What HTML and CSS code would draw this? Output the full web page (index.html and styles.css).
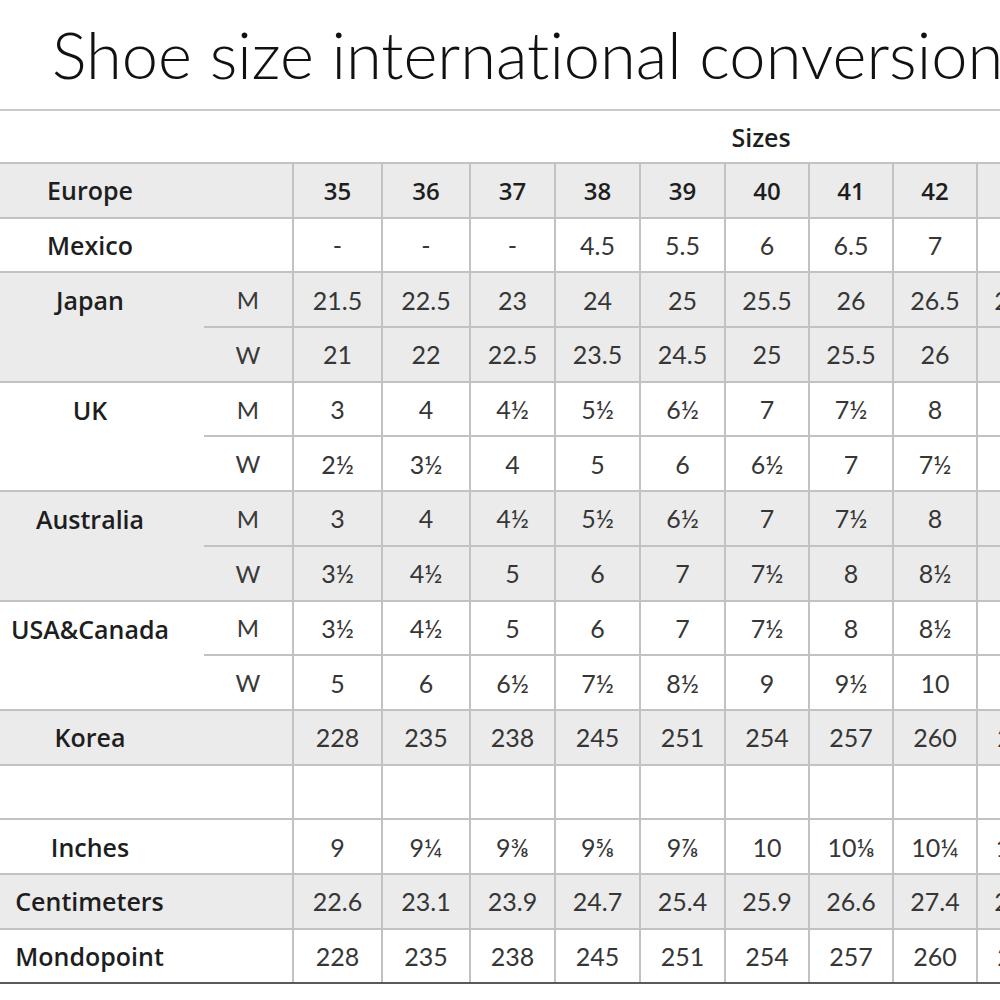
FILE: index.html
```html
<!DOCTYPE html>
<html lang="en">
<head>
<meta charset="utf-8">
<title>Shoe size international conversion</title>
<link rel="stylesheet" href="styles.css">
</head>
<body>
<h1 class="title">Shoe size international conversion</h1>
<table class="chart">
  <colgroup>
    <col class="c-lbl"><col class="c-sub">
    <col class="c-89"><col class="c-88"><col class="c-85"><col class="c-85"><col class="c-85">
    <col class="c-84"><col class="c-84"><col class="c-84"><col class="c-84"><col class="c-84"><col class="c-84">
  </colgroup>
  <tr class="head">
    <td class="blank"></td><td class="blank"></td>
    <td class="sizes" colspan="11">Sizes</td>
  </tr>
  <tr class="grey">
    <td class="lbl">Europe</td><td class="sub"></td>
    <td class="num bold">35</td><td class="num bold">36</td><td class="num bold">37</td><td class="num bold">38</td><td class="num bold">39</td><td class="num bold">40</td><td class="num bold">41</td><td class="num bold">42</td><td class="num bold">43</td><td class="num bold">44</td><td class="num bold">45</td>
  </tr>
  <tr>
    <td class="lbl">Mexico</td><td class="sub"></td>
    <td class="num">-</td><td class="num">-</td><td class="num">-</td><td class="num">4.5</td><td class="num">5.5</td><td class="num">6</td><td class="num">6.5</td><td class="num">7</td><td class="num">7.5</td><td class="num">8.5</td><td class="num">9.5</td>
  </tr>
  <tr class="grey">
    <td class="lbl top" rowspan="2">Japan</td><td class="sub">M</td>
    <td class="num">21.5</td><td class="num">22.5</td><td class="num">23</td><td class="num">24</td><td class="num">25</td><td class="num">25.5</td><td class="num">26</td><td class="num">26.5</td><td class="num">27.5</td><td class="num">28</td><td class="num">29</td>
  </tr>
  <tr class="grey">
    <td class="sub">W</td>
    <td class="num">21</td><td class="num">22</td><td class="num">22.5</td><td class="num">23.5</td><td class="num">24.5</td><td class="num">25</td><td class="num">25.5</td><td class="num">26</td><td class="num">27</td><td class="num">27.5</td><td class="num">28</td>
  </tr>
  <tr>
    <td class="lbl top" rowspan="2">UK</td><td class="sub">M</td>
    <td class="num">3</td><td class="num">4</td><td class="num">4½</td><td class="num">5½</td><td class="num">6½</td><td class="num">7</td><td class="num">7½</td><td class="num">8</td><td class="num">9</td><td class="num">10</td><td class="num">11</td>
  </tr>
  <tr>
    <td class="sub">W</td>
    <td class="num">2½</td><td class="num">3½</td><td class="num">4</td><td class="num">5</td><td class="num">6</td><td class="num">6½</td><td class="num">7</td><td class="num">7½</td><td class="num">8½</td><td class="num">9½</td><td class="num">10½</td>
  </tr>
  <tr class="grey">
    <td class="lbl top" rowspan="2">Australia</td><td class="sub">M</td>
    <td class="num">3</td><td class="num">4</td><td class="num">4½</td><td class="num">5½</td><td class="num">6½</td><td class="num">7</td><td class="num">7½</td><td class="num">8</td><td class="num">9</td><td class="num">10</td><td class="num">11</td>
  </tr>
  <tr class="grey">
    <td class="sub">W</td>
    <td class="num">3½</td><td class="num">4½</td><td class="num">5</td><td class="num">6</td><td class="num">7</td><td class="num">7½</td><td class="num">8</td><td class="num">8½</td><td class="num">9½</td><td class="num">10½</td><td class="num">11½</td>
  </tr>
  <tr>
    <td class="lbl top" rowspan="2">USA&amp;Canada</td><td class="sub">M</td>
    <td class="num">3½</td><td class="num">4½</td><td class="num">5</td><td class="num">6</td><td class="num">7</td><td class="num">7½</td><td class="num">8</td><td class="num">8½</td><td class="num">9½</td><td class="num">10½</td><td class="num">11½</td>
  </tr>
  <tr>
    <td class="sub">W</td>
    <td class="num">5</td><td class="num">6</td><td class="num">6½</td><td class="num">7½</td><td class="num">8½</td><td class="num">9</td><td class="num">9½</td><td class="num">10</td><td class="num">11</td><td class="num">12</td><td class="num">13</td>
  </tr>
  <tr class="grey">
    <td class="lbl">Korea</td><td class="sub"></td>
    <td class="num">228</td><td class="num">235</td><td class="num">238</td><td class="num">245</td><td class="num">251</td><td class="num">254</td><td class="num">257</td><td class="num">260</td><td class="num">267</td><td class="num">273</td><td class="num">279</td>
  </tr>
  <tr>
    <td class="lbl"></td><td class="sub"></td>
    <td class="num"></td><td class="num"></td><td class="num"></td><td class="num"></td><td class="num"></td><td class="num"></td><td class="num"></td><td class="num"></td><td class="num"></td><td class="num"></td><td class="num"></td>
  </tr>
  <tr>
    <td class="lbl">Inches</td><td class="sub"></td>
    <td class="num">9</td><td class="num">9¼</td><td class="num">9⅜</td><td class="num">9⅝</td><td class="num">9⅞</td><td class="num">10</td><td class="num">10⅛</td><td class="num">10¼</td><td class="num">10½</td><td class="num">10¾</td><td class="num">11</td>
  </tr>
  <tr class="grey">
    <td class="lbl wide" colspan="2">Centimeters</td>
    <td class="num">22.6</td><td class="num">23.1</td><td class="num">23.9</td><td class="num">24.7</td><td class="num">25.4</td><td class="num">25.9</td><td class="num">26.6</td><td class="num">27.4</td><td class="num">27.9</td><td class="num">28.6</td><td class="num">29.4</td>
  </tr>
  <tr class="last">
    <td class="lbl wide" colspan="2">Mondopoint</td>
    <td class="num">228</td><td class="num">235</td><td class="num">238</td><td class="num">245</td><td class="num">251</td><td class="num">254</td><td class="num">257</td><td class="num">260</td><td class="num">267</td><td class="num">273</td><td class="num">279</td>
  </tr>
</table>
</body>
</html>
```

FILE: styles.css
```css
html, body {
  margin: 0;
  padding: 0;
  background: #ffffff;
  overflow: hidden;
}

body {
  width: 1000px;
  height: 1000px;
  font-family: "Lato", "Liberation Sans", sans-serif;
  color: #222;
}

.title {
  margin: 0;
  height: 109px;
  padding-left: 52px;
  font-size: 65px;
  font-weight: 300;
  line-height: 109px;
  letter-spacing: 0;
  font-variant-ligatures: none;
  white-space: nowrap;
  color: #111;
  border-bottom: 2px solid #c9c9c9;
  width: 1300px;
  box-sizing: content-box;
}

.chart {
  border-collapse: collapse;
  table-layout: fixed;
  width: 1229px;
}

.c-lbl { width: 204px; }
.c-sub { width: 89px; }
.c-89 { width: 89px; }
.c-88 { width: 88px; }
.c-85 { width: 85px; }
.c-84 { width: 84px; }

.chart tr { height: 54.7px; }
.chart tr.head { height: 52px; }

.chart td {
  padding: 0;
  border-top: 2px solid #c2c2c2;
  border-bottom: 2px solid #c2c2c2;
  font-size: 25px;
  text-align: center;
  vertical-align: middle;
  white-space: nowrap;
}

.chart tr.head td {
  border-top: none;
}

.grey td { background: #ebebeb; }

.sizes,
.lbl,
.num.bold {
  font-family: "Open Sans", "Lato", sans-serif;
  font-weight: 600;
  font-size: 24px;
  color: #1e1e1e;
}

.sizes {
  font-size: 23px;
}

.lbl {
  padding-right: 24px !important;
}

.lbl.top {
  vertical-align: top;
  padding-top: 10px !important;
}

.lbl.wide {
  padding-right: 113px !important;
}

.sub {
  color: #3a3a3a;
  font-size: 24px !important;
  border-right: 2px solid #c2c2c2;
}

.num {
  color: #363636;
  border-left: 2px solid #c2c2c2;
  border-right: 2px solid #c2c2c2;
}

.chart tr.last td {
  border-bottom: 2px solid #5a5a5a;
}
```
